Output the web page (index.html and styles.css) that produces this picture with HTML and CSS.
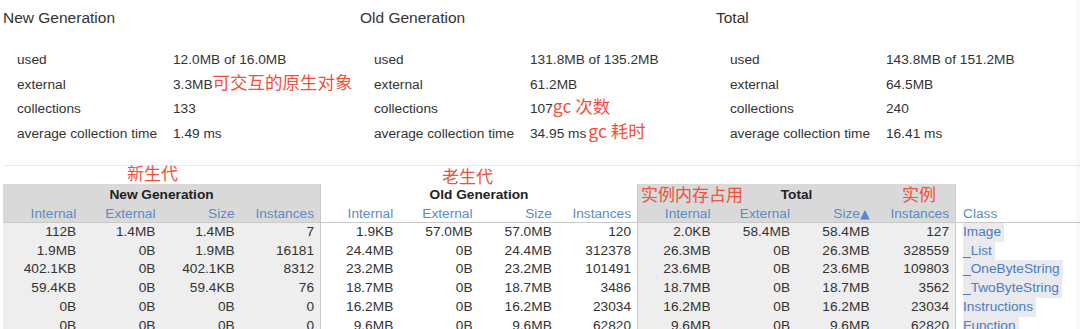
FILE: index.html
```html
<!DOCTYPE html>
<html lang="zh">
<head>
<meta charset="utf-8">
<title>Memory</title>
<link rel="stylesheet" href="styles.css">
</head>
<body>
<section class="summary">
  <div class="gen">
    <h2>New Generation</h2>
    <dl class="stats">
      <dt>used</dt><dd>12.0MB of 16.0MB</dd>
      <dt>external</dt><dd>3.3MB<span class="note">可交互的原生对象</span></dd>
      <dt>collections</dt><dd>133</dd>
      <dt>average collection time</dt><dd>1.49 ms</dd>
    </dl>
  </div>
  <div class="gen">
    <h2>Old Generation</h2>
    <dl class="stats">
      <dt>used</dt><dd>131.8MB of 135.2MB</dd>
      <dt>external</dt><dd>61.2MB</dd>
      <dt>collections</dt><dd>107<span class="note">gc 次数</span></dd>
      <dt>average collection time</dt><dd>34.95 ms<span class="note note-gap">gc 耗时</span></dd>
    </dl>
  </div>
  <div class="gen">
    <h2>Total</h2>
    <dl class="stats">
      <dt>used</dt><dd>143.8MB of 151.2MB</dd>
      <dt>external</dt><dd>64.5MB</dd>
      <dt>collections</dt><dd>240</dd>
      <dt>average collection time</dt><dd>16.41 ms</dd>
    </dl>
  </div>
</section>

<section class="heap">
  <span class="tag tag-new">新生代</span>
  <span class="tag tag-old">老生代</span>
  <span class="tag tag-mem">实例内存占用</span>
  <span class="tag tag-inst">实例</span>
  <table class="heap-table">
    <colgroup>
      <col class="c1"><col class="c1"><col class="c1"><col class="c1">
      <col class="c1"><col class="c1"><col class="c1"><col class="c1">
      <col class="c2"><col class="c2"><col class="c2"><col class="c2">
      <col class="c3">
    </colgroup>
    <thead>
      <tr class="groups">
        <th colspan="4" class="shade-h">New Generation</th>
        <th colspan="4" class="gstart">Old Generation</th>
        <th colspan="4" class="gstart shade-h">Total</th>
        <th class="gstart"></th>
      </tr>
      <tr class="cols">
        <th class="shade-h">Internal</th><th class="shade-h">External</th><th class="shade-h">Size</th><th class="shade-h">Instances</th>
        <th class="gstart">Internal</th><th>External</th><th>Size</th><th>Instances</th>
        <th class="gstart shade-h">Internal</th><th class="shade-h">External</th><th class="shade-h">Size<span class="sort">▲</span></th><th class="shade-h">Instances</th>
        <th class="gstart cls-h">Class</th>
      </tr>
    </thead>
    <tbody>
      <tr>
        <td class="shade">112B</td><td class="shade">1.4MB</td><td class="shade">1.4MB</td><td class="shade">7</td>
        <td class="gstart">1.9KB</td><td>57.0MB</td><td>57.0MB</td><td>120</td>
        <td class="gstart shade">2.0KB</td><td class="shade">58.4MB</td><td class="shade">58.4MB</td><td class="shade">127</td>
        <td class="gstart cls"><span>Image</span></td>
      </tr>
      <tr>
        <td class="shade">1.9MB</td><td class="shade">0B</td><td class="shade">1.9MB</td><td class="shade">16181</td>
        <td class="gstart">24.4MB</td><td>0B</td><td>24.4MB</td><td>312378</td>
        <td class="gstart shade">26.3MB</td><td class="shade">0B</td><td class="shade">26.3MB</td><td class="shade">328559</td>
        <td class="gstart cls"><span>_List</span></td>
      </tr>
      <tr>
        <td class="shade">402.1KB</td><td class="shade">0B</td><td class="shade">402.1KB</td><td class="shade">8312</td>
        <td class="gstart">23.2MB</td><td>0B</td><td>23.2MB</td><td>101491</td>
        <td class="gstart shade">23.6MB</td><td class="shade">0B</td><td class="shade">23.6MB</td><td class="shade">109803</td>
        <td class="gstart cls"><span>_OneByteString</span></td>
      </tr>
      <tr>
        <td class="shade">59.4KB</td><td class="shade">0B</td><td class="shade">59.4KB</td><td class="shade">76</td>
        <td class="gstart">18.7MB</td><td>0B</td><td>18.7MB</td><td>3486</td>
        <td class="gstart shade">18.7MB</td><td class="shade">0B</td><td class="shade">18.7MB</td><td class="shade">3562</td>
        <td class="gstart cls"><span>_TwoByteString</span></td>
      </tr>
      <tr>
        <td class="shade">0B</td><td class="shade">0B</td><td class="shade">0B</td><td class="shade">0</td>
        <td class="gstart">16.2MB</td><td>0B</td><td>16.2MB</td><td>23034</td>
        <td class="gstart shade">16.2MB</td><td class="shade">0B</td><td class="shade">16.2MB</td><td class="shade">23034</td>
        <td class="gstart cls"><span>Instructions</span></td>
      </tr>
      <tr>
        <td class="shade">0B</td><td class="shade">0B</td><td class="shade">0B</td><td class="shade">0</td>
        <td class="gstart">9.6MB</td><td>0B</td><td>9.6MB</td><td>62820</td>
        <td class="gstart shade">9.6MB</td><td class="shade">0B</td><td class="shade">9.6MB</td><td class="shade">62820</td>
        <td class="gstart cls"><span>Function</span></td>
      </tr>
    </tbody>
  </table>
</section>
</body>
</html>
```

FILE: styles.css
```css
html, body {
  margin: 0;
  background: #fff;
}
body {
  padding-left: 3px;
  font-family: "Liberation Sans", "Noto Sans CJK SC", sans-serif;
  color: #333;
  overflow: hidden;
}
body::after {
  content: "";
  position: fixed;
  top: 0;
  right: 0;
  width: 7px;
  height: 100%;
  background: linear-gradient(to right, rgba(0,0,0,0), rgba(0,0,0,0.035));
}

/* ---------- summary ---------- */
.summary {
  display: grid;
  grid-template-columns: 357px 356px 1fr;
  padding-bottom: 19px;
  border-bottom: 1px solid #ebebeb;
}
.gen h2 {
  margin: 8px 0 0;
  font-size: 15.5px;
  line-height: 20px;
  font-weight: normal;
  color: #333;
}
.stats {
  margin: 20px 0 0;
  padding-left: 14px;
  display: grid;
  grid-template-columns: 156px auto;
  grid-auto-rows: 24.5px;
  font-size: 13.7px;
  line-height: 24.5px;
}
.stats dt, .stats dd {
  margin: 0;
  white-space: nowrap;
}
.note {
  color: #f0503c;
  font-family: "Noto Sans CJK SC", sans-serif;
  font-size: 17.5px;
  line-height: 1;
}
.note-gap {
  margin-left: 2px;
}

/* ---------- heap table ---------- */
.heap {
  position: relative;
  padding-top: 18px;
}
.tag {
  position: absolute;
  color: #f0503c;
  font-family: "Noto Sans CJK SC", sans-serif;
  font-size: 17px;
  line-height: 17px;
  white-space: nowrap;
  z-index: 2;
}
.tag-new { left: 124px; top: -2px; }
.tag-old { left: 439px; top: 1px; }
.tag-mem { left: 638px; top: 19px; }
.tag-inst { left: 899px; top: 19px; }

.heap-table {
  border-collapse: separate;
  border-spacing: 0;
  table-layout: fixed;
  width: 1077px;
  font-size: 13.7px;
}
.c1 { width: 79.25px; }
.c2 { width: 79.5px; }
.c3 { width: 125px; }

.heap-table th, .heap-table td {
  padding: 0 6px 0 0;
  white-space: nowrap;
  overflow: visible;
}
.groups th {
  height: 20px;
  font-weight: bold;
  color: #222;
  text-align: center;
  padding: 0;
}
.cols th {
  height: 18px;
  font-weight: normal;
  color: #5b8bc7;
  text-align: right;
  border-bottom: 1px solid #c9c9c9;
}
.cols th.cls-h {
  text-align: left;
  padding-left: 7px;
}
.sort {
  font-family: "DejaVu Sans", sans-serif;
  font-size: 12.5px;
}
.heap-table td {
  height: 18.7px;
  line-height: 18.7px;
  text-align: right;
  color: #333;
}
.shade-h { background: #d9d9d9; }
.shade { background: #eeeeee; }
.gstart { border-left: 1px solid #c9c9c9; }
.heap-table td.cls {
  text-align: left;
  padding-left: 7px;
}
.cls span {
  display: inline-block;
  background: #e9e9ee;
  color: #4b7dbf;
  padding-right: 3px;
}
```
